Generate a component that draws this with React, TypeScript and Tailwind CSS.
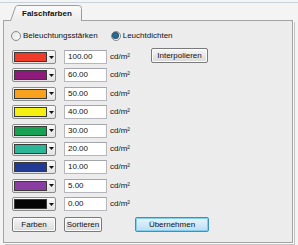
import React from 'react';

// Falschfarben-Dialog: Farbskala für Leuchtdichten
interface Stufe {
  farbe: string;
  wert: string;
}

const stufen: Stufe[] = [
  { farbe: 'bg-[#ee3b2a]', wert: '100.00' },
  { farbe: 'bg-[#8e1b7c]', wert: '60.00' },
  { farbe: 'bg-[#f8a11f]', wert: '50.00' },
  { farbe: 'bg-[#f4ee12]', wert: '40.00' },
  { farbe: 'bg-[#17a152]', wert: '30.00' },
  { farbe: 'bg-[#2db597]', wert: '20.00' },
  { farbe: 'bg-[#213a94]', wert: '10.00' },
  { farbe: 'bg-[#8a3ea2]', wert: '5.00' },
  { farbe: 'bg-[#050505]', wert: '0.00' },
];

function Radio({ checked, label }: { checked?: boolean; label: string }) {
  return (
    <label className="flex items-center gap-[2px] h-[11px]">
      <span className="w-[10px] h-[10px] rounded-full border border-[#8a8a8a] bg-gradient-to-br from-[#e6e6e6] to-[#fbfbfb] flex items-center justify-center">
        {checked && (
          <span className="w-[5px] h-[5px] rounded-full bg-[#1d6f96] shadow-[0_0_0_1px_#2a4f6e]" />
        )}
      </span>
      <span>{label}</span>
    </label>
  );
}

function Knopf({ label, breite, aktiv }: { label: string; breite: string; aktiv?: boolean }) {
  const basis = aktiv
    ? 'border-[#3a92c0] bg-gradient-to-b from-[#e8f5fc] to-[#b9def2] shadow-[inset_0_0_0_1px_#7fd0f0]'
    : 'border-[#7a7a7a] bg-gradient-to-b from-[#f6f6f6] to-[#dadada] shadow-[inset_0_0_0_1px_#fcfcfc]';
  return (
    <button className={`${breite} h-[15px] rounded-[2px] border ${basis} flex items-center justify-center text-[8px] leading-none text-[#111]`}>
      {label}
    </button>
  );
}

function FarbAuswahl({ farbe }: { farbe: string }) {
  return (
    <div className="w-[44px] h-[14px] rounded-[2px] border border-[#8d8d8d] bg-gradient-to-b from-[#fafafa] to-[#e2e2e2] flex items-center pl-[1px]">
      <div className={`w-[33px] h-[10px] border border-[#3a3a3a] ${farbe}`} />
      <div className="flex-1 flex items-center justify-center">
        <svg width="5" height="3" viewBox="0 0 5 3">
          <path d="M0 0 L5 0 L2.5 3 Z" fill="#111" />
        </svg>
      </div>
    </div>
  );
}

export default function App() {
  return (
    <div className="w-[298px] h-[245px] bg-[#f4f4f4] pt-[2px] font-['Liberation_Sans',Arial,sans-serif] text-[8px] leading-none text-[#111] overflow-hidden">
      <div className="border-t border-[#c9d3dc] h-[243px] flex flex-col">
        {/* Reiterleiste */}
        <div className="h-[17px] flex items-end pl-[10px]">
          <div className="relative w-[72px] h-[16px] -mb-px z-10 flex items-center pl-[12px] pt-[2px] font-bold">
            <svg className="absolute inset-0" width="72" height="16" viewBox="0 0 72 16">
              <defs>
                <linearGradient id="tab" x1="0" y1="0" x2="0" y2="1">
                  <stop offset="0" stopColor="#fbfbfb" />
                  <stop offset="1" stopColor="#ececec" />
                </linearGradient>
              </defs>
              <path d="M0.5 16 L5.5 2 Q6 1 7.5 0.5 L68.5 0.5 Q71.5 0.5 71.5 3.5 L71.5 16 Z" fill="url(#tab)" />
              <path d="M0.5 16 L5.5 2 Q6 1 7.5 0.5 L68.5 0.5 Q71.5 0.5 71.5 3.5 L71.5 16" fill="none" stroke="#9c9c9c" />
            </svg>
            <span className="relative">Falschfarben</span>
          </div>
        </div>

        {/* Inhalt */}
        <div className="ml-[3px] w-[290px] h-[223px] border border-[#a3a3a3] bg-[#ececec] shadow-[1px_1px_0_#fafafa,2px_2px_0_#c4c4c4] pl-[8px] pt-[9px] flex flex-col">
          <div className="flex items-center -ml-px">
            <Radio label="Beleuchtungsstärken" />
            <div className="ml-[13px]">
              <Radio checked label="Leuchtdichten" />
            </div>
          </div>

          <div className="mt-[9px] flex flex-col gap-[4.4px]">
            {stufen.map((s, i) => (
              <div key={i} className="flex items-center h-[14px]">
                <FarbAuswahl farbe={s.farbe} />
                <div className="ml-[8px] w-[43px] h-[14px] bg-white border border-[#b5b7bd] border-t-[#a2a5ac] flex items-center pl-[3px]">
                  {s.wert}
                </div>
                <span className="ml-[3px] w-[41px]">cd/m²</span>
                {i === 0 && (
                  <div className="-mt-[3px]">
                    <Knopf label="Interpolieren" breite="w-[57px]" />
                  </div>
                )}
              </div>
            ))}
          </div>

          <div className="mt-[6px] flex items-center">
            <Knopf label="Farben" breite="w-[44px]" />
            <div className="ml-[8px]">
              <Knopf label="Sortieren" breite="w-[38px]" />
            </div>
            <div className="ml-[33px]">
              <Knopf label="Übernehmen" breite="w-[74px]" aktiv />
            </div>
          </div>
        </div>
      </div>
    </div>
  );
}
